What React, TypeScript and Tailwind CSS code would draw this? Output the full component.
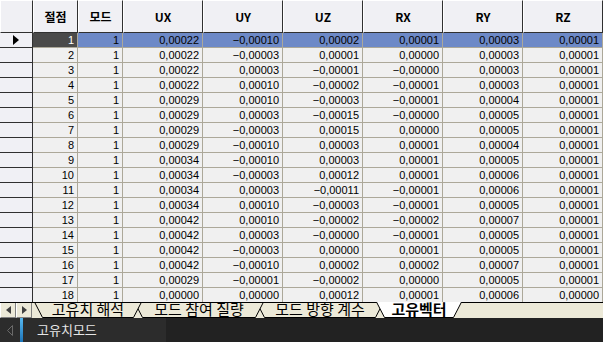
import React from 'react';

type Row = [string, string, string, string, string, string];

const rows: Row[] = [
  ['0,00022', '−0,00010', '0,00002', '0,00001', '0,00003', '0,00001'],
  ['0,00022', '−0,00003', '0,00001', '0,00000', '0,00003', '0,00001'],
  ['0,00022', '0,00003', '−0,00001', '−0,00000', '0,00003', '0,00001'],
  ['0,00022', '0,00010', '−0,00002', '−0,00001', '0,00003', '0,00001'],
  ['0,00029', '0,00010', '−0,00003', '−0,00001', '0,00004', '0,00001'],
  ['0,00029', '0,00003', '−0,00015', '−0,00000', '0,00005', '0,00001'],
  ['0,00029', '−0,00003', '0,00015', '0,00000', '0,00005', '0,00001'],
  ['0,00029', '−0,00010', '0,00003', '0,00001', '0,00004', '0,00001'],
  ['0,00034', '−0,00010', '0,00003', '0,00001', '0,00005', '0,00001'],
  ['0,00034', '−0,00003', '0,00012', '0,00001', '0,00006', '0,00001'],
  ['0,00034', '0,00003', '−0,00011', '−0,00001', '0,00006', '0,00001'],
  ['0,00034', '0,00010', '−0,00003', '−0,00001', '0,00005', '0,00001'],
  ['0,00042', '0,00010', '−0,00002', '−0,00002', '0,00007', '0,00001'],
  ['0,00042', '0,00003', '−0,00000', '−0,00001', '0,00005', '0,00001'],
  ['0,00042', '−0,00003', '0,00000', '0,00001', '0,00005', '0,00001'],
  ['0,00042', '−0,00010', '0,00002', '0,00002', '0,00007', '0,00001'],
  ['0,00029', '−0,00001', '−0,00002', '0,00000', '0,00005', '0,00001'],
  ['0,00000', '0,00000', '0,00012', '0,00001', '0,00006', '0,00000'],
];

const headers = ['절점', '모드', 'UX', 'UY', 'UZ', 'RX', 'RY', 'RZ'];

const tabs = [
  { label: '고유치 해석', width: 108, active: false },
  { label: '모드 참여 질량', width: 130, active: false },
  { label: '모드 방향 계수', width: 128, active: false },
  { label: '고유벡터', width: 86, active: true },
];

const cell =
  'h-[15px] border-r border-b border-[#aca899] px-[3px] text-right leading-[14px] whitespace-nowrap overflow-hidden';

const Tab: React.FC<{ label: string; width: number; active: boolean; z: number; first: boolean }> = ({
  label,
  width,
  active,
  z,
  first,
}) => {
  const h = 16;
  const s = 8;
  return (
    <div
      className={`relative h-[16px] shrink-0 flex items-start justify-center ${first ? 'ml-[2px]' : '-ml-[8px]'} -mt-[1px]`}
      style={{ width, zIndex: z }}
    >
      <svg className="absolute inset-0" width={width} height={h} viewBox={`0 0 ${width} ${h}`}>
        <polygon
          points={`0.5,0 ${s + 0.5},${h - 0.5} ${width - s - 0.5},${h - 0.5} ${width - 0.5},0`}
          fill={active ? '#ffffff' : '#ece9d8'}
        />
        {!active && <line x1="0" y1="0.5" x2={width} y2="0.5" stroke="#000" strokeWidth="1" />}
        <polyline
          points={`0.5,0 ${s + 0.5},${h - 0.5} ${width - s - 0.5},${h - 0.5} ${width - 0.5},0`}
          fill="none"
          stroke="#000"
          strokeWidth="1"
        />
      </svg>
      <span
        className={`relative -mt-[1px] text-[15px] leading-[15px] text-black ${active ? 'font-bold' : 'font-normal'}`}
        style={{ fontFamily: '"Noto Sans CJK KR", "Noto Sans", sans-serif' }}
      >
        {label}
      </span>
    </div>
  );
};

export default function App() {
  return (
    <div className="w-[603px] h-[342px] overflow-hidden flex flex-col bg-[#f0f0f0]">
      <div className="h-[302px] overflow-hidden shrink-0">
        <div
          className="grid grid-cols-[33px_45px_45px_repeat(6,80px)] text-[11px] text-black"
          style={{ fontFamily: '"Liberation Sans", Arial, sans-serif' }}
        >
          <div className="h-[33px] bg-[#f0f0f4] border-r border-b border-[#303030] border-t border-l border-t-white border-l-white" />
          {headers.map((h) => (
            <div
              key={h}
              className="h-[33px] bg-[#f0f0f4] border-r border-b border-[#303030] border-t border-l border-t-white border-l-white flex items-center justify-center font-bold text-[12px]"
              style={{ fontFamily: '"Noto Sans CJK KR", "Liberation Sans", sans-serif' }}
            >
              {h}
            </div>
          ))}
          {rows.map((r, i) => {
            const sel = i === 0;
            return (
              <React.Fragment key={i}>
                <div className="h-[15px] bg-[#f0f0f5] border-r border-b border-[#303030] flex items-center pl-[13px]">
                  {sel && (
                    <svg width="6" height="10" viewBox="0 0 6 10">
                      <polygon points="0,0 6,5 0,10" fill="#000" />
                    </svg>
                  )}
                </div>
                <div className={`${cell} ${sel ? 'bg-[#4a4a4a] text-white' : 'bg-[#f0f0f0]'}`}>{i + 1}</div>
                <div className={`${cell} ${sel ? 'bg-[#6d89c7]' : 'bg-[#f0f0f0]'}`}>1</div>
                {r.map((v, j) => (
                  <div key={j} className={`${cell} ${sel ? 'bg-[#6d89c7]' : 'bg-[#f0f0f0]'}`}>
                    {v}
                  </div>
                ))}
              </React.Fragment>
            );
          })}
        </div>
      </div>

      <div className="h-[16px] shrink-0 flex bg-[#ece9d8] border-t border-black">
        <div className="flex shrink-0">
          <button className="w-[16px] h-[15px] flex items-center justify-center bg-[#ece9d8] border-r border-b border-[#808080] border-l border-l-white">
            <svg width="5" height="8" viewBox="0 0 5 8">
              <polygon points="5,0 0,4 5,8" fill="#404040" />
            </svg>
          </button>
          <button className="w-[16px] h-[15px] flex items-center justify-center bg-[#ece9d8] border-r border-b border-[#808080] border-l border-l-white">
            <svg width="5" height="8" viewBox="0 0 5 8">
              <polygon points="0,0 5,4 0,8" fill="#404040" />
            </svg>
          </button>
        </div>
        {tabs.map((t, i) => (
          <Tab key={t.label} label={t.label} width={t.width} active={t.active} first={i === 0} z={t.active ? 20 : 10 - i} />
        ))}
      </div>

      <div className="h-[24px] shrink-0 flex">
        <div className="w-[166px] h-full bg-[#2c2c2c] flex items-center">
          <div className="w-[20px] flex justify-center">
            <svg width="6" height="11" viewBox="0 0 6 11">
              <polyline points="5.5,0.5 0.5,5.5 5.5,10.5" fill="none" stroke="#6a6a6a" strokeWidth="1" />
              <line x1="5.5" y1="0.5" x2="5.5" y2="10.5" stroke="#6a6a6a" strokeWidth="1" />
            </svg>
          </div>
          <div className="w-[3px] h-full bg-gradient-to-b from-[#56b8f0] to-[#1c74b8]" />
          <span
            className="ml-[14px] text-[13px] text-[#e6e6e6]"
            style={{ fontFamily: '"Noto Sans CJK KR", "Noto Sans", sans-serif' }}
          >
            고유치모드
          </span>
        </div>
        <div className="flex-1 h-full bg-[#222222]" />
      </div>
    </div>
  );
}
